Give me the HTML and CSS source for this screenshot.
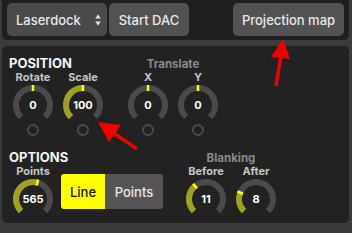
FILE: index.html
```html
<!DOCTYPE html>
<html>
<head>
<meta charset="utf-8">
<link rel="stylesheet" href="styles.css">
</head>
<body>
<div class="topbar">
  <div class="select"><span>Laserdock</span>
    <svg class="updown" width="6" height="12" viewBox="0 0 6 12"><path d="M3 0.5 L5.8 4.5 L0.2 4.5 Z M3 11.5 L5.8 7.5 L0.2 7.5 Z" fill="#e6e6e6"/></svg>
  </div>
  <div class="btn start">Start DAC</div>
  <div class="btn proj">Projection map</div>
</div>
<div class="panel">
  <section class="row position">
    <div class="group">
      <div class="title">POSITION</div>
      <div class="knobs">
        <div class="knob"><div class="label">Rotate</div>
          <svg width="50" height="54" viewBox="0 0 50 54"><path class="track" d="M12.98 34.02 A17 17 0 1 1 37.02 34.02"/><line class="tick" x1="25" y1="8" x2="25" y2="2"/><text class="val" x="25" y="26">0</text><circle class="ring" cx="25" cy="47" r="5"/></svg>
        </div>
        <div class="knob"><div class="label">Scale</div>
          <svg width="50" height="54" viewBox="0 0 50 54"><path class="track" d="M12.98 34.02 A17 17 0 1 1 37.02 34.02"/><path class="fill" d="M12.98 34.02 A17 17 0 0 1 25 5"/><line class="tick" x1="25" y1="8" x2="25" y2="2"/><text class="val" x="25" y="26">100</text><circle class="ring" cx="25" cy="47" r="5"/></svg>
        </div>
      </div>
    </div>
    <div class="group second">
      <div class="subtitle">Translate</div>
      <div class="knobs">
        <div class="knob"><div class="label">X</div>
          <svg width="50" height="54" viewBox="0 0 50 54"><path class="track" d="M12.98 34.02 A17 17 0 1 1 37.02 34.02"/><line class="tick" x1="25" y1="8" x2="25" y2="2"/><text class="val" x="25" y="26">0</text><circle class="ring" cx="25" cy="47" r="5"/></svg>
        </div>
        <div class="knob"><div class="label">Y</div>
          <svg width="50" height="54" viewBox="0 0 50 54"><path class="track" d="M12.98 34.02 A17 17 0 1 1 37.02 34.02"/><line class="tick" x1="25" y1="8" x2="25" y2="2"/><text class="val" x="25" y="26">0</text><circle class="ring" cx="25" cy="47" r="5"/></svg>
        </div>
      </div>
    </div>
  </section>
  <section class="row options">
    <div class="group">
      <div class="title">OPTIONS</div>
      <div class="knobs">
        <div class="knob"><div class="label">Points</div>
          <svg width="50" height="44" viewBox="0 0 50 44"><path class="track" d="M12.98 34.02 A17 17 0 1 1 37.02 34.02"/><path class="fill" d="M12.98 34.02 A17 17 0 0 1 29.40 5.58"/><line class="tick" x1="28.62" y1="8.48" x2="30.18" y2="2.68"/><text class="val" x="25" y="26">565</text></svg>
        </div>
        <div class="toggle">
          <div class="seg on">Line</div>
          <div class="seg">Points</div>
        </div>
      </div>
    </div>
    <div class="group third">
      <div class="subtitle">Blanking</div>
      <div class="knobs">
        <div class="knob"><div class="label">Before</div>
          <svg width="50" height="44" viewBox="0 0 50 44"><path class="track" d="M12.98 34.02 A17 17 0 1 1 37.02 34.02"/><path class="fill" d="M12.98 34.02 A17 17 0 0 1 14.07 8.98"/><line class="tick" x1="16" y1="11.28" x2="12.14" y2="6.68"/><text class="val" x="25" y="26">11</text></svg>
        </div>
        <div class="knob"><div class="label">After</div>
          <svg width="50" height="44" viewBox="0 0 50 44"><path class="track" d="M12.98 34.02 A17 17 0 1 1 37.02 34.02"/><path class="fill" d="M12.98 34.02 A17 17 0 0 1 9.24 15.63"/><line class="tick" x1="12.02" y1="16.76" x2="6.46" y2="14.51"/><text class="val" x="25" y="26">8</text></svg>
        </div>
      </div>
    </div>
  </section>
</div>
<svg class="annot" width="352" height="233" viewBox="0 0 352 233">
  <line x1="276" y1="86" x2="281" y2="55" stroke="#f20000" stroke-width="3.5"/>
  <polygon points="283,39 290,59 271,57" fill="#f20000"/>
  <line x1="112" y1="132" x2="137" y2="149" stroke="#f20000" stroke-width="3.5"/>
  <polygon points="98,122 121,125 109,142" fill="#f20000"/>
</svg>
</body>
</html>
```

FILE: styles.css
```css
html, body {
  margin: 0;
  padding: 0;
}
body {
  width: 352px;
  height: 233px;
  overflow: hidden;
  background: #3b3b3b;
  font-family: Inter, "Liberation Sans", sans-serif;
  position: relative;
}
.topbar {
  margin: 0 3px 0 2px;
  height: 40px;
  box-sizing: border-box;
  padding: 3px 5px;
  background: #1f1f1f;
  border-radius: 0 0 5px 5px;
  display: flex;
  gap: 2px;
}
.select {
  width: 100px;
  height: 33px;
  box-sizing: border-box;
  padding: 0 6px 0 9px;
  display: flex;
  align-items: center;
  justify-content: space-between;
  background: #4a4a4a;
  border-radius: 5px;
  color: #e8e8e8;
  font-size: 13px;
  font-weight: 500;
  white-space: nowrap;
}
.btn {
  height: 33px;
  display: flex;
  align-items: center;
  justify-content: center;
  background: #525252;
  border-radius: 5px;
  color: #e8e8e8;
  font-size: 13px;
  font-weight: 500;
  white-space: nowrap;
}
.start { width: 80px; }
.proj { width: 111px; margin-left: auto; }

.panel {
  margin: 6px 3px 0 2px;
  height: 177px;
  box-sizing: border-box;
  padding: 9px 0 0 6px;
  background: #222222;
  border-radius: 5px;
}
.row {
  display: flex;
}
.options { margin-top: 12px; }
.second { margin-left: 15px; }
.third { margin-left: 18px; }
.title {
  font-size: 13px;
  font-weight: 700;
  line-height: 16px;
  color: #f2f2f2;
  padding-left: 1px;
}
.subtitle {
  font-size: 11.5px;
  font-weight: 700;
  line-height: 16px;
  padding-top: 1px;
  height: 15px;
  color: #8a8a8a;
  text-align: center;
}
.knobs {
  display: flex;
}
.knob {
  width: 50px;
  display: flex;
  flex-direction: column;
  align-items: center;
}
.label {
  font-size: 11px;
  font-weight: 700;
  line-height: 12px;
  color: #c4c4c4;
}
.knob svg { display: block; }
.track, .fill {
  fill: none;
  stroke-width: 6;
}
.track { stroke: #4a4a4a; }
.fill { stroke: #a0a022; }
.tick {
  stroke: #ffff00;
  stroke-width: 2.5;
}
.ring {
  fill: none;
  stroke: #4a4a4a;
  stroke-width: 2;
}
.val {
  font-family: Inter, "Liberation Sans", sans-serif;
  font-size: 11px;
  font-weight: 700;
  fill: #ffffff;
  text-anchor: middle;
}
.toggle {
  display: flex;
  margin: 9px 0 0 3px;
  height: 35px;
  border-radius: 3px;
  overflow: hidden;
}
.seg {
  display: flex;
  align-items: center;
  justify-content: center;
  font-size: 13px;
  font-weight: 500;
  background: #555555;
  color: #e8e8e8;
  width: 58px;
}
.seg.on {
  width: 44px;
  background: #ffff00;
  color: #111111;
}
.annot {
  position: absolute;
  left: 0;
  top: 0;
  pointer-events: none;
}
```
